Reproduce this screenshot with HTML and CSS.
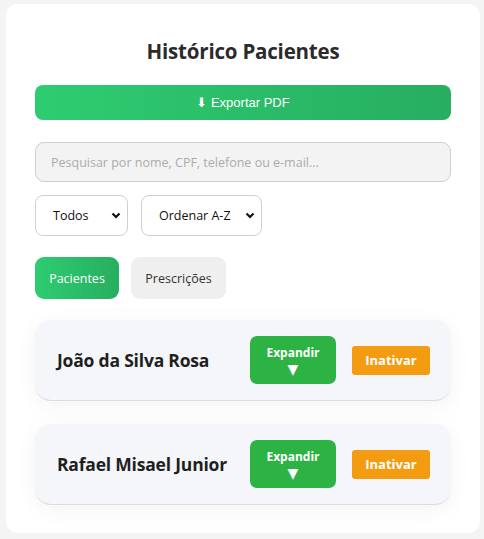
FILE: index.html
```html
<!DOCTYPE html>
<html lang="pt-BR">
<head>
<meta charset="utf-8">
<title>Histórico Pacientes</title>
<link rel="stylesheet" href="styles.css">
</head>
<body>
<main class="panel">
  <h1 class="title">Histórico Pacientes</h1>
  <button class="export-btn">⬇ Exportar PDF</button>
  <input class="search" type="text" placeholder="Pesquisar por nome, CPF, telefone ou e-mail...">
  <div class="filters">
    <div class="select select-status"><span>Todos</span><svg width="10" height="7" viewBox="0 0 10 7"><path d="M1.5 1.5 L5 5 L8.5 1.5" fill="none" stroke="#111" stroke-width="2.2"/></svg></div>
    <div class="select select-order"><span>Ordenar A-Z</span><svg width="10" height="7" viewBox="0 0 10 7"><path d="M1.5 1.5 L5 5 L8.5 1.5" fill="none" stroke="#111" stroke-width="2.2"/></svg></div>
  </div>
  <div class="tabs">
    <button class="tab tab-active">Pacientes</button>
    <button class="tab tab-presc">Prescrições</button>
  </div>
  <div class="list">
    <div class="patient">
      <span class="name">João da Silva Rosa</span>
      <div class="actions">
        <button class="expand-btn">Expandir<br><span class="arrow">▼</span></button>
        <button class="deactivate-btn">Inativar</button>
      </div>
    </div>
    <div class="patient">
      <span class="name">Rafael Misael Junior</span>
      <div class="actions">
        <button class="expand-btn">Expandir<br><span class="arrow">▼</span></button>
        <button class="deactivate-btn">Inativar</button>
      </div>
    </div>
  </div>
</main>
</body>
</html>
```

FILE: styles.css
```css
* { box-sizing: border-box; }
html, body { margin: 0; padding: 0; }
body {
  background: #f4f4f4;
  font-family: "Open Sans", "Noto Sans", sans-serif;
  padding: 4px 4px 6px 6px;
}
.panel {
  background: #fff;
  border-radius: 12px;
  padding: 30px 29px 28px 29px;
  display: flex;
  flex-direction: column;
  min-height: 529px;
}
.title {
  margin: 0;
  text-align: center;
  font-size: 20.5px;
  font-weight: 700;
  color: #2b2b2b;
  line-height: 34px;
  letter-spacing: -0.2px;
}
.export-btn {
  margin-top: 17px;
  height: 35px;
  border: none;
  border-radius: 8px;
  background: linear-gradient(90deg, #2ecc71, #27ae60);
  color: #fff;
  font-family: "Liberation Sans", Arial, sans-serif;
  font-size: 13px;
}
.search {
  margin-top: 22px;
  height: 40px;
  border: 1px solid #cfcfcf;
  border-radius: 9px;
  background: #f3f3f3;
  padding: 0 15px;
  font-family: "Open Sans", sans-serif;
  font-size: 12.5px;
  outline: none;
}
.search::placeholder { color: #ababab; }
.filters {
  margin-top: 13px;
  display: flex;
  gap: 13px;
}
.select {
  height: 41px;
  border: 1px solid #cfcfcf;
  border-radius: 8px;
  background: #fff;
  display: flex;
  align-items: center;
  justify-content: space-between;
  padding: 0 6px 0 17px;
  font-family: "Open Sans", sans-serif;
  font-size: 12.5px;
  color: #111;
}
.select-status { width: 93px; }
.select-order { width: 121px; padding-left: 17px; }
.tabs {
  margin-top: 21px;
  display: flex;
  gap: 12px;
}
.tab {
  height: 42px;
  border: none;
  border-radius: 9px;
  background: #efefef;
  color: #333;
  font-family: "Open Sans", sans-serif;
  font-size: 12.5px;
  padding: 0;
  width: 95px;
}
.tab-active {
  width: 84px;
  background: linear-gradient(90deg, #2ecc71, #27ae60);
  color: #fff;
}
.list {
  margin-top: 21px;
  display: flex;
  flex-direction: column;
  gap: 23px;
}
.patient {
  height: 81px;
  background: #f5f6fa;
  border-radius: 16px;
  border-bottom: 1px solid #dcdcdc;
  box-shadow: 0 4px 22px rgba(0,0,0,0.05);
  display: flex;
  align-items: center;
  justify-content: space-between;
  padding: 0 21px 0 22px;
}
.name {
  font-size: 17.5px;
  font-weight: 700;
  color: #1f1f1f;
  letter-spacing: -0.2px;
}
.actions {
  display: flex;
  align-items: center;
  gap: 16px;
}
.expand-btn {
  width: 86px;
  height: 48px;
  border: none;
  border-radius: 7px;
  background: #2db343;
  color: #fff;
  font-family: "Open Sans", sans-serif;
  font-weight: 700;
  font-size: 12px;
  line-height: 17px;
  padding: 2px 0 0;
}
.arrow {
  font-family: "DejaVu Sans", sans-serif;
  font-size: 14px;
  font-weight: 400;
}
.deactivate-btn {
  width: 78px;
  height: 29px;
  border: none;
  border-radius: 3px;
  background: #f39c12;
  color: #fff;
  font-family: "Open Sans", sans-serif;
  font-weight: 700;
  font-size: 13px;
}
```
